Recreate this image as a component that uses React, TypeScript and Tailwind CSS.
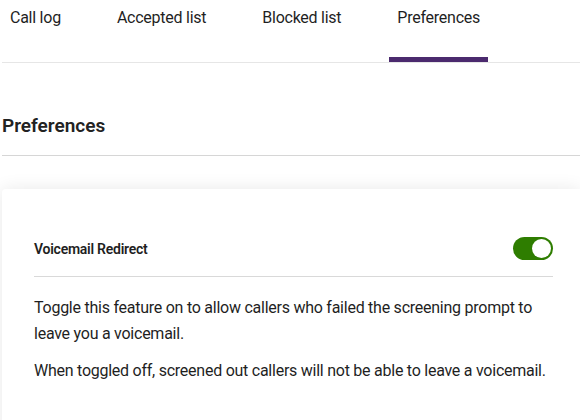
import { useState } from 'react';

const TABS = ['Call log', 'Accepted list', 'Blocked list', 'Preferences'];

export default function App() {
  const [active, setActive] = useState('Preferences');
  const [redirect, setRedirect] = useState(true);

  return (
    <div className="h-screen overflow-hidden bg-white pl-[2px] font-['Roboto',sans-serif] tracking-[-0.25px] text-[#1f1f1f]">
      <nav className="flex gap-10 border-b border-[#e6e6e6]">
        {TABS.map((t) => (
          <button
            key={t}
            type="button"
            onClick={() => setActive(t)}
            className="relative flex h-[62px] items-start px-2 pt-[6px] text-left text-[16px] leading-6"
          >
            {t}
            {active === t ? (
              <span className="absolute left-0 right-0 bottom-0 h-[5px] bg-[#4b2a6e]" />
            ) : null}
          </button>
        ))}
      </nav>

      <div className="mt-[49px] border-b border-[#d6d6d6] pb-[15px]">
        <h2 className="text-[19px] font-semibold leading-7 tracking-normal text-[#222]">Preferences</h2>
      </div>

      <div className="mt-[33px] rounded-tl-[4px] bg-white pl-8 pr-[27px] pt-[48px] pb-[60px] shadow-[0_0_18px_rgba(0,0,0,0.09)]">
        <div className="flex items-center justify-between border-b border-[#d9d9d9] pb-[16px]">
          <span className="text-[14px] font-semibold leading-5">Voicemail Redirect</span>
          <button
            type="button"
            role="switch"
            aria-checked={redirect}
            onClick={() => setRedirect(!redirect)}
            className={
              'flex h-[23px] w-10 items-center rounded-full p-[2px] ' +
              (redirect ? 'justify-end bg-[#2e7d00]' : 'justify-start bg-[#9e9e9e]')
            }
          >
            <span className="block h-[19px] w-[19px] rounded-full bg-white" />
          </button>
        </div>
        <p className="mt-[18px] text-[16px] leading-[26px]">
          Toggle this feature on to allow callers who failed the screening prompt to leave you a voicemail.
        </p>
        <p className="mt-[11px] text-[16px] leading-[26px]">
          When toggled off, screened out callers will not be able to leave a voicemail.
        </p>
      </div>
    </div>
  );
}
